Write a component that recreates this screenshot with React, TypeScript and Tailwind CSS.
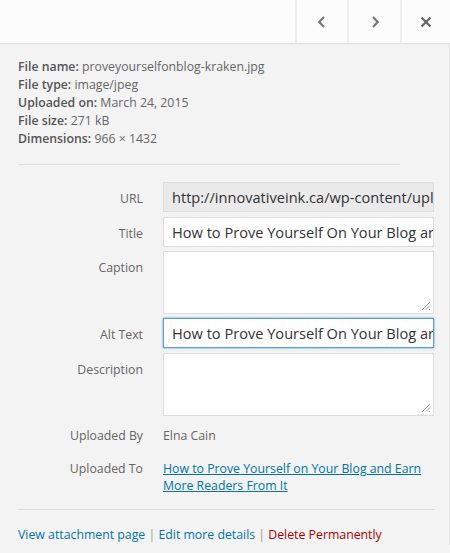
import React from 'react';

const FONT = { fontFamily: '"Open Sans", "Noto Sans", sans-serif' };

const META = [
  { label: 'File name:', value: 'proveyourselfonblog-kraken.jpg' },
  { label: 'File type:', value: 'image/jpeg' },
  { label: 'Uploaded on:', value: 'March 24, 2015' },
  { label: 'File size:', value: '271 kB' },
  { label: 'Dimensions:', value: '966 × 1432' },
];

const Label = ({ children, pt = 'pt-[8px]' }: { children: React.ReactNode; pt?: string }) => (
  <div className={`w-[125px] shrink-0 text-right text-[12.3px] leading-[18px] text-[#666] ${pt}`}>{children}</div>
);

const Resize = () => (
  <svg className="absolute right-[2px] bottom-[2px]" width="10" height="10" viewBox="0 0 10 10">
    <path d="M9 1 L1 9 M9 4.5 L4.5 9 M9 8 L8 9" stroke="#aaa" strokeWidth="1" />
  </svg>
);

export default function App() {
  return (
    <div className="w-[450px] h-[553px] overflow-hidden bg-[#f3f3f3]" style={FONT}>
      {/* Header */}
      <div className="flex h-[44px] justify-end border-b border-[#ddd] bg-[#fcfcfc]">
        <button className="flex w-[52px] items-center justify-center border-l-2 border-[#eee] text-[#777]">
          <svg width="14" height="14" viewBox="0 0 14 14"><path d="M9 2 L4.2 7 L9 12" fill="none" stroke="currentColor" strokeWidth="2.2" /></svg>
        </button>
        <button className="flex w-[53px] items-center justify-center border-l-2 border-[#eee] text-[#777]">
          <svg width="14" height="14" viewBox="0 0 14 14"><path d="M5 2 L9.8 7 L5 12" fill="none" stroke="currentColor" strokeWidth="2.2" /></svg>
        </button>
        <button className="flex w-[50px] items-center justify-center border-l-2 border-[#eee] text-[#666]">
          <svg width="12" height="12" viewBox="0 0 12 12"><path d="M1.5 1.5 L10.5 10.5 M10.5 1.5 L1.5 10.5" fill="none" stroke="currentColor" strokeWidth="2.2" /></svg>
        </button>
      </div>

      <div className="border-r border-[#e2e2e2] pl-[18px] pr-[15px]">
        {/* File info */}
        <div className="w-[382px] border-b border-[#ddd] pt-[14px] pb-[16px]">
          {META.map(({ label, value }) => (
            <div key={label} className="text-[12.3px] leading-[18px] text-[#666]">
              <strong className="font-semibold text-[#555]">{label}</strong> {value}
            </div>
          ))}
        </div>

        {/* Settings */}
        <div className="pt-[17px]">
          <div className="flex gap-[20px]">
            <Label>URL</Label>
            <div className="h-[30px] w-[271px] overflow-hidden whitespace-nowrap border border-[#ddd] bg-[#eaeaea] px-[8px] text-[14.6px] leading-[28px] text-[#333]">
              http://innovativeink.ca/wp-content/uploads/2015/03/proveyourselfonblog-kraken.jpg
            </div>
          </div>
          <div className="mt-[5px] flex gap-[20px]">
            <Label>Title</Label>
            <div className="h-[30px] w-[271px] overflow-hidden whitespace-nowrap border border-[#ddd] bg-white px-[8px] text-[14.6px] leading-[28px] text-[#333]">
              How to Prove Yourself On Your Blog and Earn More Readers From It
            </div>
          </div>
          <div className="mt-[4px] flex gap-[20px]">
            <Label pt="pt-[8px]">Caption</Label>
            <div className="relative h-[63px] w-[271px] border border-[#ddd] bg-white">
              <Resize />
            </div>
          </div>
          <div className="mt-[4px] flex gap-[20px]">
            <Label>Alt Text</Label>
            <div className="h-[30px] w-[271px] overflow-hidden whitespace-nowrap border border-[#5b9dd9] bg-white px-[8px] text-[14.6px] leading-[28px] text-[#333] shadow-[0_0_2px_rgba(30,140,190,0.8)]">
              How to Prove Yourself On Your Blog and Earn More Readers From It
            </div>
          </div>
          <div className="mt-[5px] flex gap-[20px]">
            <Label pt="pt-[8px]">Description</Label>
            <div className="relative h-[63px] w-[271px] border border-[#ddd] bg-white">
              <Resize />
            </div>
          </div>
          <div className="mt-[11px] flex gap-[20px]">
            <Label pt="pt-0">Uploaded By</Label>
            <div className="text-[12.3px] leading-[18px] text-[#666]">Elna Cain</div>
          </div>
          <div className="mt-[15px] flex gap-[20px]">
            <Label pt="pt-0">Uploaded To</Label>
            <a href="#" className="w-[265px] text-[12.3px] leading-[17px] text-[#0073aa] underline">
              How to Prove Yourself on Your Blog and Earn More Readers From It
            </a>
          </div>
        </div>

        {/* Actions */}
        <div className="mt-[15px] w-[417px] border-t border-[#ddd] pt-[15px] text-[12.3px] leading-[20px]">
          <a href="#" className="text-[#0073aa]">View attachment page</a>
          <span className="text-[#999]"> | </span>
          <a href="#" className="text-[#0073aa]">Edit more details</a>
          <span className="text-[#999]"> | </span>
          <a href="#" className="text-[#a00]">Delete Permanently</a>
        </div>
      </div>
    </div>
  );
}
